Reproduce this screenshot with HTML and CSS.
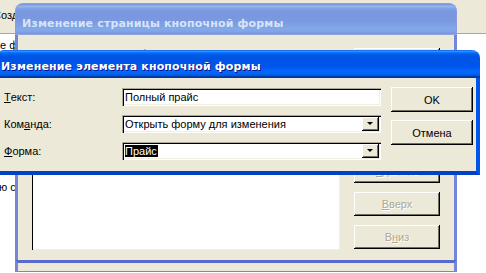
FILE: index.html
```html
<!DOCTYPE html>
<html lang="ru">
<head>
    <meta charset="UTF-8">
    <title>Изменение элемента кнопочной формы</title>
    <link rel="stylesheet" href="styles.css">
</head>
<body>
    <div class="desktop">
        <!-- Access window behind the dialogs -->
        <div class="app">
            <div class="app-toolbar">
                <span class="app-tool">Создать</span>
            </div>
            <div class="app-sheet">
                <p class="app-line">е формы</p>
                <p class="app-line app-line-low">ю структуру</p>
            </div>
        </div>

        <!-- Inactive switchboard page dialog -->
        <section class="win win-back">
            <header class="win-title">
                <h2>Изменение страницы кнопочной формы</h2>
            </header>
            <div class="win-body back-body">
                <div class="back-main">
                    <p class="back-label">Название кнопочной формы:</p>
                    <div class="listbox"></div>
                </div>
                <div class="back-buttons">
                    <button class="btn">Закрыть</button>
                    <button class="btn btn-gap">Создать...</button>
                    <button class="btn">Изменить...</button>
                    <button class="btn" disabled><u>У</u>далить</button>
                    <button class="btn" disabled><u>В</u>верх</button>
                    <button class="btn" disabled>В<u>н</u>из</button>
                </div>
            </div>
            <div class="back-status"></div>
        </section>

        <!-- Active item dialog -->
        <section class="win win-front">
            <header class="win-title">
                <h2>Изменение элемента кнопочной формы</h2>
            </header>
            <div class="win-body front-body">
                <div class="form-grid">
                    <label class="form-label"><u>Т</u>екст:</label>
                    <div class="field">Полный прайс</div>

                    <label class="form-label">Ком<u>а</u>нда:</label>
                    <div class="field combo">
                        <span class="combo-text">Открыть форму для изменения</span>
                        <span class="drop"></span>
                    </div>

                    <label class="form-label"><u>Ф</u>орма:</label>
                    <div class="field combo">
                        <span class="combo-text"><span class="sel">Прайс</span></span>
                        <span class="drop"></span>
                    </div>
                </div>
                <div class="front-buttons">
                    <button class="btn btn-dlg">OK</button>
                    <button class="btn btn-dlg">Отмена</button>
                </div>
            </div>
        </section>
    </div>
</body>
</html>
```

FILE: styles.css
```css
:root {
    --face: #ece9d8;
    --light: #f1efe2;
    --shadow: #aca899;
    --dark: #716f64;
    --active-frame: #0055ea;
    --inactive-frame: #7585da;
}

* {
    margin: 0;
    padding: 0;
    box-sizing: border-box;
}

body {
    width: 486px;
    height: 273px;
    overflow: hidden;
    background: #ffffff;
    font-family: "Liberation Sans", Arial, sans-serif;
    font-size: 11px;
    color: #000000;
}

.desktop {
    position: relative;
    width: 486px;
    height: 273px;
    overflow: hidden;
}

/* background application */
.app {
    height: 100%;
}

.app-toolbar {
    height: 34px;
    background: var(--face);
    border-bottom: 1px solid var(--shadow);
    display: flex;
    align-items: center;
    padding-bottom: 3px;
    overflow: hidden;
}

.app-tool {
    margin-left: -7px;
    white-space: nowrap;
}

.app-sheet {
    padding-top: 5px;
}

.app-line {
    line-height: 13px;
    white-space: nowrap;
}

.app-line-low {
    margin-top: 129px;
    margin-left: -1px;
}

/* windows */
.win {
    position: absolute;
    display: flex;
    flex-direction: column;
}

.win-title {
    display: flex;
    align-items: center;
    border-radius: 8px 8px 0 0;
    flex: none;
}

.win-title h2 {
    font-family: "DejaVu Sans", sans-serif;
    font-size: 11px;
    font-weight: 700;
    letter-spacing: 0.15px;
    white-space: nowrap;
}

.win-body {
    background: var(--face);
    display: flex;
}

/* inactive dialog */
.win-back {
    left: 15px;
    top: 3px;
    width: 442px;
    height: 272px;
}

.win-back .win-title {
    height: 32px;
    padding: 8px 0 0 6px;
    background: linear-gradient(to bottom, #7697e7 0%, #7e9ee3 3%, #94afe8 6%, #97b4e9 8%, #82a5e4 14%, #7c9fe2 17%, #7996de 25%, #7b99e1 56%, #82a9e9 81%, #80a5e7 89%, #7b96e1 94%, #7a93df 97%, #abbae3 100%);
    border: 1px solid #8a9be3;
    border-bottom: none;
}

.win-back .win-title h2 {
    color: #d8e4f8;
}

.back-body {
    height: 225px;
    border-left: 3px solid var(--inactive-frame);
    border-right: 3px solid var(--inactive-frame);
    padding: 0 14px 10px 14px;
    gap: 14px;
}

.back-main {
    flex: 1;
    display: flex;
    flex-direction: column;
}

.back-label {
    margin-top: 13px;
    line-height: 13px;
    white-space: nowrap;
}

.listbox {
    flex: 1;
    margin-top: 27px;
    background: #ffffff;
    box-shadow: inset 1px 1px 0 #000000, inset -1px -1px 0 var(--light);
}

.back-buttons {
    width: 86px;
    display: flex;
    flex-direction: column;
    gap: 9px;
    padding-top: 13px;
}

.back-buttons .btn {
    height: 24px;
}

.back-buttons .btn-gap {
    margin-top: 12px;
}

.back-status {
    height: 12px;
    background: var(--face);
    border: 3px solid var(--inactive-frame);
    border-top-color: #5a6acc;
    border-bottom: 1px solid var(--inactive-frame);
}

/* buttons */
.btn {
    font-family: inherit;
    font-size: 11px;
    color: #000000;
    background: var(--face);
    border: none;
    box-shadow: inset -1px -1px 0 #000000, inset 1px 1px 0 #ffffff, inset -2px -2px 0 var(--dark);
}

.btn:disabled {
    color: var(--shadow);
    text-shadow: 1px 1px 0 #ffffff;
}

/* active dialog */
.win-front {
    left: -4px;
    top: 50px;
    width: 484px;
}

.win-front .win-title {
    height: 28px;
    padding: 5px 0 0 5px;
    background: linear-gradient(to bottom, #0058ee 0%, #3593ff 4%, #288eff 6%, #127dff 8%, #036ffc 10%, #0262ee 14%, #0057e5 20%, #0054e3 24%, #0055eb 56%, #005bf5 66%, #026afe 76%, #0062ef 86%, #0052d6 92%, #0040ab 94%, #003092 100%);
}

.win-front .win-title h2 {
    color: #ffffff;
    text-shadow: 1px 1px 0 #0f1089;
}

.front-body {
    height: 97px;
    border: 4px solid var(--active-frame);
    border-top: none;
    border-bottom-color: #0041c8;
    padding: 10px 3px 0 4px;
    gap: 10px;
}

.form-grid {
    display: grid;
    grid-template-columns: 118px 259px;
    grid-auto-rows: 18px;
    row-gap: 9px;
    align-self: flex-start;
}

.form-label {
    display: flex;
    align-items: center;
    white-space: nowrap;
}

.field {
    background: #ffffff;
    display: flex;
    align-items: center;
    padding: 0 2px 0 3px;
    white-space: nowrap;
    box-shadow: inset 1px 1px 0 var(--shadow), inset 2px 2px 0 #000000, inset -1px -1px 0 #ffffff, inset -2px -2px 0 var(--light);
}

.combo-text {
    flex: 1;
    overflow: hidden;
}

.sel {
    background: #000000;
    color: #ffffff;
    padding: 1px 1px 1px 0;
}

.drop {
    width: 17px;
    height: 14px;
    background: var(--face);
    box-shadow: inset -1px -1px 0 #000000, inset 1px 1px 0 #ffffff, inset -2px -2px 0 var(--dark);
    display: flex;
    align-items: center;
    justify-content: center;
}

.drop::after {
    content: '';
    border-left: 3px solid transparent;
    border-right: 3px solid transparent;
    border-top: 3px solid #000000;
    margin: 0 1px 1px 0;
}

.front-buttons {
    width: 82px;
    display: flex;
    flex-direction: column;
    gap: 8px;
    margin-top: -1px;
}

.btn-dlg {
    height: 25px;
}
```
